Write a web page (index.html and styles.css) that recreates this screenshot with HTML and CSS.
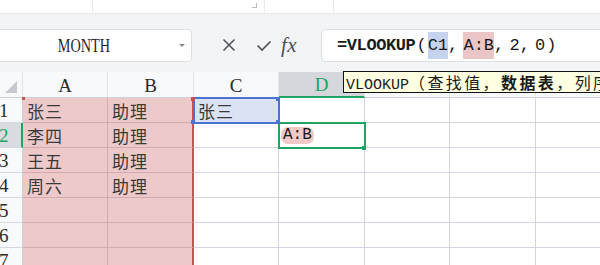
FILE: index.html
```html
<!DOCTYPE html>
<html lang="zh">
<head>
<meta charset="utf-8">
<link rel="stylesheet" href="styles.css">
</head>
<body>
<div class="page">
  <div class="topstrip">
    <div class="seg seg1"></div>
    <div class="seg seg2"><span class="corner-mark"></span></div>
    <div class="seg seg3"></div>
    <div class="seg seg4"></div>
  </div>
  <div class="toolbar">
    <div class="namebox">
      <span class="name"><span class="name-txt">MONTH</span></span>
      <span class="dd"></span>
    </div>
    <div class="fbtns">
      <svg class="ic-x" width="14" height="14" viewBox="0 0 14 14"><path d="M1.5 1.5 L12.5 12.5 M12.5 1.5 L1.5 12.5" stroke="#4d5157" stroke-width="1.5" fill="none"/></svg>
      <svg class="ic-ok" width="16" height="12" viewBox="0 0 16 12"><path d="M1.5 5.5 L6 10 L14.5 1.5" stroke="#4d5157" stroke-width="1.6" fill="none"/></svg>
      <span class="ic-fx">fx</span>
    </div>
    <div class="formula">
      <span class="fn">=VLOOKUP</span><span class="par">(</span><span class="ref-c">C1</span><span class="sep">, </span><span class="ref-ab">A:B</span><span class="sep">, </span><span>2</span><span class="sep">, </span><span>0</span><span class="par">)</span>
    </div>
  </div>
  <div class="sheet">
    <div class="grid">
      <div class="hd corner"><span class="tri"></span></div>
      <div class="hd">A</div>
      <div class="hd">B</div>
      <div class="hd">C</div>
      <div class="hd hd-active">D</div>
      <div class="hd"></div>
      <div class="hd"></div>
      <div class="hd"></div>

      <div class="rh">1</div>
      <div class="c pk">张三</div>
      <div class="c pk pkr">助理</div>
      <div class="c c1">张三</div>
      <div class="c"></div>
      <div class="c"></div>
      <div class="c"></div>
      <div class="c"></div>

      <div class="rh rh-active">2</div>
      <div class="c pk">李四</div>
      <div class="c pk pkr">助理</div>
      <div class="c"></div>
      <div class="c d2"><span class="chip">A:B</span></div>
      <div class="c"></div>
      <div class="c"></div>
      <div class="c"></div>

      <div class="rh">3</div>
      <div class="c pk">王五</div>
      <div class="c pk pkr">助理</div>
      <div class="c"></div>
      <div class="c"></div>
      <div class="c"></div>
      <div class="c"></div>
      <div class="c"></div>

      <div class="rh">4</div>
      <div class="c pk">周六</div>
      <div class="c pk pkr">助理</div>
      <div class="c"></div>
      <div class="c"></div>
      <div class="c"></div>
      <div class="c"></div>
      <div class="c"></div>

      <div class="rh">5</div>
      <div class="c pk"></div>
      <div class="c pk pkr"></div>
      <div class="c"></div>
      <div class="c"></div>
      <div class="c"></div>
      <div class="c"></div>
      <div class="c"></div>

      <div class="rh">6</div>
      <div class="c pk"></div>
      <div class="c pk pkr"></div>
      <div class="c"></div>
      <div class="c"></div>
      <div class="c"></div>
      <div class="c"></div>
      <div class="c"></div>

      <div class="rh">7</div>
      <div class="c pk"></div>
      <div class="c pk pkr"></div>
      <div class="c"></div>
      <div class="c"></div>
      <div class="c"></div>
      <div class="c"></div>
      <div class="c"></div>
    </div>
    <span class="hdl hdl-red hdl-a1"></span>
    <span class="hdl hdl-red hdl-b1"></span>
    <span class="hdl hdl-blue hdl-c1tr"></span>
    <span class="hdl hdl-blue hdl-c1br"></span>
    <span class="hdl hdl-blue hdl-c1bl"></span>
    <span class="hdl hdl-green hdl-d2"></span>
  </div>
  <div class="tooltip"><span class="tt-fn">VLOOKUP</span><span class="tt-cjk">（查找值，<b>数据表</b>，列序号，[匹配条件]）</span></div>
</div>
</body>
</html>
```

FILE: styles.css
```css
* { box-sizing: border-box; }
html, body { margin: 0; padding: 0; }
body {
  width: 600px;
  height: 265px;
  overflow: hidden;
  background: #ffffff;
  font-family: "Liberation Mono", "Noto Sans CJK SC", monospace;
  color: #222;
}
.page { position: relative; width: 600px; height: 265px; overflow: hidden; }

.topstrip {
  height: 14px;
  display: flex;
  background: #ffffff;
  border-bottom: 1px solid #e6e8ec;
}
.seg { height: 100%; border-right: 1px solid #e9ebee; position: relative; }
.seg1 { width: 93px; }
.seg2 { width: 172px; }
.seg3 { width: 69px; }
.seg4 { flex: 1; border-right: none; }
.corner-mark {
  position: absolute;
  right: 7px;
  top: 3px;
  width: 5px;
  height: 5px;
  border-right: 1px solid #b9bcc2;
  border-bottom: 1px solid #b9bcc2;
}

.toolbar {
  height: 58px;
  background: #f3f4f6;
  display: flex;
  align-items: flex-start;
  padding-top: 15px;
}
.namebox {
  margin-left: -10px;
  width: 202px;
  height: 33px;
  background: #ffffff;
  border: 1px solid #dcdfe4;
  border-radius: 4px;
  display: flex;
  align-items: center;
  position: relative;
}
.name {
  width: 186px;
  text-align: center;
}
.name-txt {
  display: inline-block;
  font-family: "Liberation Serif", serif;
  font-size: 19px;
  color: #1f1f1f;
  transform: scaleX(0.75);
}
.dd {
  position: absolute;
  right: 6px;
  top: 14px;
  width: 0;
  height: 0;
  border-left: 3px solid transparent;
  border-right: 3px solid transparent;
  border-top: 3px solid #8a8d92;
}
.fbtns {
  width: 129px;
  height: 33px;
  display: flex;
  align-items: center;
  position: relative;
}
.ic-x { position: absolute; left: 30px; top: 9px; }
.ic-ok { position: absolute; left: 64px; top: 11px; }
.ic-fx {
  position: absolute;
  left: 89px;
  top: 4px;
  font-family: "Liberation Serif", serif;
  font-style: italic;
  font-size: 21px;
  color: #4d5157;
  letter-spacing: 0.5px;
}
.formula {
  flex: 1;
  margin-right: -10px;
  height: 33px;
  background: #ffffff;
  border: 1px solid #dcdfe4;
  border-radius: 4px;
  display: flex;
  align-items: center;
  padding-left: 15px;
  font-family: "Liberation Mono", monospace;
  font-size: 17px;
  color: #1a1a1a;
  white-space: pre;
}
.fn { font-weight: bold; letter-spacing: -0.4px; }
.par { margin: 0 1px; }
.sep { letter-spacing: -4px; margin-right: 3px; }
.ref-c { background: #c6d3ef; padding: 4px 0; }
.ref-ab { background: #ebc6c6; padding: 4px 0; }

.sheet { position: relative; }
.grid {
  display: grid;
  grid-template-columns: 23px 85px 86px 85px 86px 85px 86px 86px;
  grid-template-rows: 26px;
  grid-auto-rows: 25px;
  width: 622px;
}
.hd {
  background: #f8f9fb;
  border-right: 1px solid #e2e4e8;
  border-bottom: 1px solid #cdd1d9;
  font-family: "Liberation Serif", serif;
  font-size: 19px;
  color: #2a2a2a;
  display: flex;
  align-items: center;
  justify-content: center;
  padding-top: 2px;
}
.corner { position: relative; }
.tri {
  position: absolute;
  left: 5px;
  top: 9px;
  width: 0;
  height: 0;
  border-left: 12px solid transparent;
  border-bottom: 12px solid #c6c9ce;
}
.hd-active {
  background: #d5d7dc;
  color: #21a366;
  border-bottom: 2px solid #21a366;
}
.rh {
  background: #f8f9fb;
  border-right: 1px solid #cdd1d9;
  border-bottom: 1px solid #d5d8e2;
  font-family: "Liberation Serif", serif;
  font-size: 19px;
  color: #2a2a2a;
  display: flex;
  align-items: center;
  padding-left: 0;
  padding-top: 2px;
  text-indent: -1px;
  overflow: hidden;
}
.rh-active {
  background: #d8dbe0;
  color: #21a366;
  border-right: 2px solid #21a366;
}
.c {
  border-right: 1px solid #d3d6e2;
  border-bottom: 1px solid #d3d6e2;
  font-family: "Noto Sans CJK SC", sans-serif;
  font-size: 17px;
  color: #3a3a3a;
  display: flex;
  align-items: center;
  padding-left: 4px;
  letter-spacing: 1px;
  background: #ffffff;
}
.pk {
  background: #edc9c9;
  border-right-color: #d3aab1;
  border-bottom-color: #d3aab1;
}
.pkr { border-right: 2px solid #c9514f; }
.c1 {
  background: #dbe2f4;
  outline: 2px solid #4a73d2;
  outline-offset: -1px;
  position: relative;
  z-index: 1;
}
.d2 {
  outline: 2px solid #21a366;
  outline-offset: -1px;
  position: relative;
  z-index: 1;
  padding-left: 2px;
}
.chip {
  font-family: "Liberation Mono", monospace;
  font-size: 16px;
  color: #1a1a1a;
  background: #f0c9c9;
  border-radius: 7px;
  padding: 0 2px;
  letter-spacing: 0;
  line-height: 17px;
}

.hdl { position: absolute; width: 4px; height: 4px; z-index: 2; }
.hdl-red { background: #c9514f; }
.hdl-blue { background: #4a73d2; }
.hdl-green { background: #21a366; }
.hdl-a1 { left: 22px; top: 25px; width: 3px; height: 3px; }
.hdl-b1 { left: 191px; top: 25px; }
.hdl-c1tr { left: 276px; top: 25px; }
.hdl-c1br { left: 276px; top: 48px; }
.hdl-c1bl { left: 191px; top: 48px; }
.hdl-d2 { left: 362px; top: 74px; }

.tooltip {
  position: absolute;
  left: 343px;
  top: 71px;
  height: 22px;
  width: 300px;
  background: #ffffe1;
  border: 1px solid #111;
  font-family: "Noto Sans CJK SC", sans-serif;
  font-size: 16px;
  line-height: 20px;
  color: #1a1a1a;
  white-space: nowrap;
  padding-left: 2px;
  overflow: hidden;
  z-index: 3;
}
.tt-fn { font-family: "Liberation Mono", monospace; font-size: 15px; }
.tt-cjk { letter-spacing: 2.4px; }
.tooltip b { font-weight: bold; }
```
